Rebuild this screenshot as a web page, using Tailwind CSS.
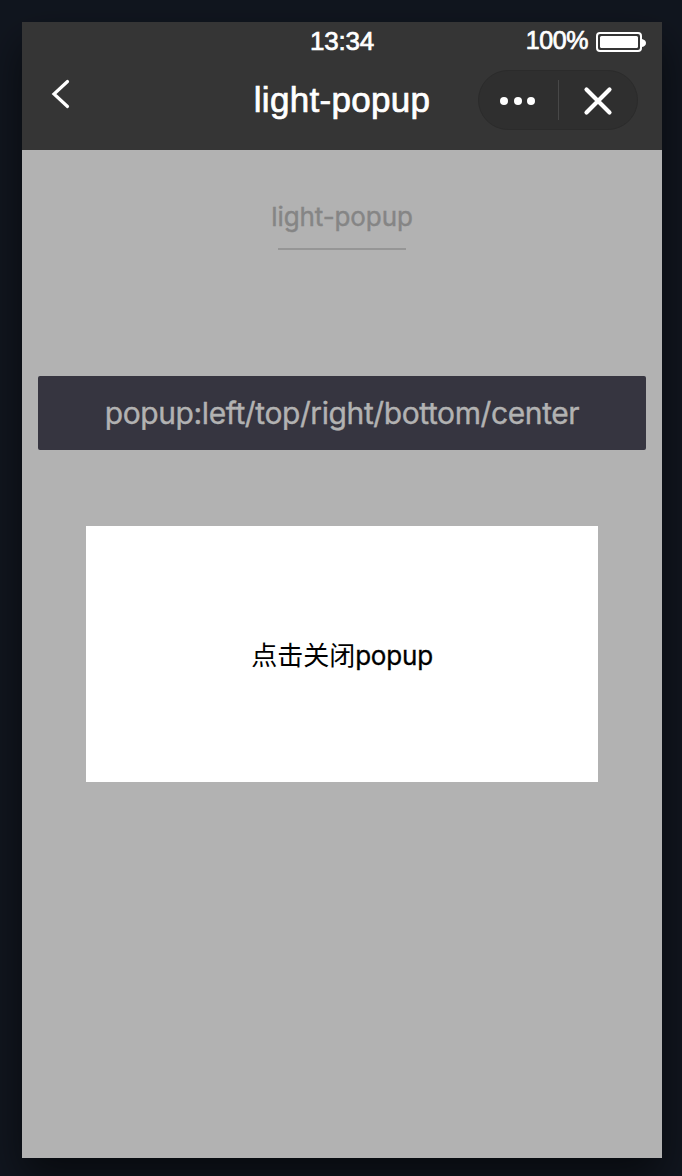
<!DOCTYPE html>
<html lang="zh">
<head>
<meta charset="utf-8">
<title>light-popup</title>
<script src="https://cdn.jsdelivr.net/npm/@tailwindcss/browser@4"></script>
</head>
<body class="h-[1176px] w-[682px] overflow-hidden bg-[#11161f] p-[22px] pb-[18px] pr-5">
<div class="relative flex h-[1136px] w-[640px] flex-col bg-[#b2b2b2] shadow-[0_20px_40px_rgba(0,0,0,0.55)]">
  <header class="relative h-32 shrink-0 bg-[#353535] text-white">
    <div class="grid h-10 grid-cols-3 font-['Liberation_Sans',sans-serif] text-[26px] leading-[38px] [-webkit-text-stroke:0.7px_white]">
      <span></span>
      <span class="text-center tracking-[-0.2px]">13:34</span>
      <div class="flex items-center justify-end gap-2 pr-4">
        <span class="-mt-1 text-[25px] tracking-[-0.4px]">100%</span>
        <svg class="h-5 w-[50px]" viewBox="0 0 50 20" fill="none"><rect x="1" y="1" width="44" height="18" rx="3" stroke="white" stroke-width="2"/><rect x="4" y="4" width="38" height="12" rx="1.5" fill="white"/><path d="M46 7Q50 8 50 11Q50 14 46 15Z" fill="white"/></svg>
      </div>
    </div>
    <div class="flex h-[76px] items-center justify-center">
      <svg class="absolute left-[28px] top-[56px] h-8 w-6" viewBox="0 0 24 32" fill="none" stroke="white" stroke-width="3.2" stroke-linecap="round"><path d="M17.5 3.500L4 16L17.500 28.500"/></svg>
      <h1 class="font-['Liberation_Sans',sans-serif] text-[35px] leading-[76px] tracking-[0.3px] [-webkit-text-stroke:0.7px_white]">light-popup</h1>
      <div class="absolute right-6 top-12 flex h-[60px] w-40 items-center rounded-full border border-[#2b2b2b] bg-[#2f2f2f]">
        <svg class="h-[58px] w-[158px]" viewBox="0 0 158 58" fill="none"><g fill="white"><circle cx="25" cy="30" r="4"/><circle cx="39" cy="30" r="4"/><circle cx="52" cy="30" r="4"/></g><path d="M79.5 9V49" stroke="#484848"/><path d="M107.500 18.500L130.500 41.500M130.500 18.500L107.500 41.500" stroke="white" stroke-width="4.200" stroke-linecap="round"/></svg>
      </div>
    </div>
  </header>
  <main class="flex flex-col px-4 pt-[46px] font-[Inter,'Noto_Sans_CJK_SC',sans-serif]">
    <div class="flex flex-col items-center">
      <h2 class="text-[26px] leading-[42px] tracking-[-0.1px] text-[#858585] [-webkit-text-stroke:0.4px_#858585]">light-popup</h2>
      <div class="mt-[10px] h-0.5 w-32 bg-[#969696]"></div>
    </div>
    <button class="mt-[126px] h-[74px] rounded-[2px] bg-[#363540] text-[30px] leading-[74px] tracking-[-0.4px] text-[#b2b2b2] [-webkit-text-stroke:0.4px_#b2b2b2]">popup:left/top/right/bottom/center</button>
    <div class="mx-12 mt-[76px] flex h-64 items-center justify-center bg-white pt-0.5 text-[26px] text-black"><span>点击关闭<span class="tracking-[-0.2px] [-webkit-text-stroke:0.3px_black]">popup</span></span></div>
  </main>
</div>
</body>
</html>
